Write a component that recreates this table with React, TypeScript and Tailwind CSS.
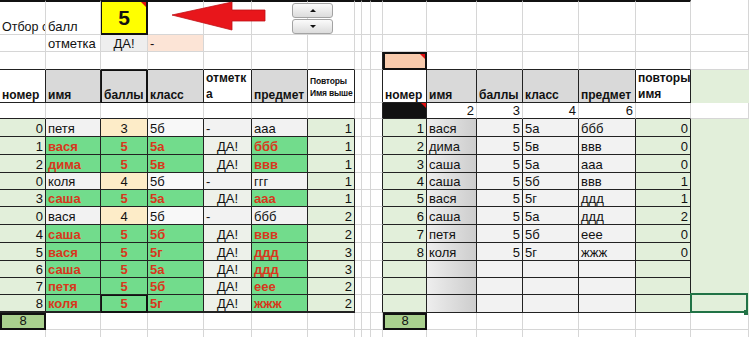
import React from "react";

// gridline / table border variants (per side colours so nothing fights)
const GRID = "border-r border-b border-r-[#d6d6d6] border-b-[#d6d6d6]";
const BOX = "border-r border-b border-r-[#222] border-b-[#222]";
const BOXL = "border-r border-b-2 border-r-[#222] border-b-[#222]";
const UNDER = "border-r border-b border-r-[#d6d6d6] border-b-[#222]";
const EDGE = "border-r border-b border-r-[#222] border-b-[#d6d6d6]";
const FILL = "border-r border-b border-r-[#e2efda] border-b-[#e2efda] bg-[#e2efda]";
const TOP = " border-t-2 border-t-[#111]";

const A = " items-end px-[2px] leading-[14px]";
const L = A + " justify-start";
const R = A + " justify-end";
const M = A + " justify-center";

const HL = " bg-[#72dc8c] text-[#d8371c] font-bold";

const leftRows: [string, string, string, string, string, string, string, boolean][] = [
  ["0", "петя", "3", "5б", "-", "ааа", "1", false],
  ["1", "вася", "5", "5а", "ДА!", "ббб", "1", true],
  ["2", "дима", "5", "5в", "ДА!", "ввв", "1", true],
  ["0", "коля", "4", "5б", "-", "ггг", "1", false],
  ["3", "саша", "5", "5а", "ДА!", "ааа", "1", true],
  ["0", "вася", "4", "5б", "-", "ббб", "2", false],
  ["4", "саша", "5", "5б", "ДА!", "ввв", "2", true],
  ["5", "вася", "5", "5г", "ДА!", "ддд", "3", true],
  ["6", "саша", "5", "5а", "ДА!", "ддд", "3", true],
  ["7", "петя", "5", "5б", "ДА!", "еее", "2", true],
  ["8", "коля", "5", "5г", "ДА!", "жжж", "2", true],
];

const rightRows: string[][] = [
  ["1", "вася", "5", "5а", "ббб", "0"],
  ["2", "дима", "5", "5в", "ввв", "0"],
  ["3", "саша", "5", "5а", "ааа", "0"],
  ["4", "саша", "5", "5б", "ввв", "1"],
  ["5", "вася", "5", "5г", "ддд", "1"],
  ["6", "саша", "5", "5а", "ддд", "2"],
  ["7", "петя", "5", "5б", "еее", "0"],
  ["8", "коля", "5", "5г", "жжж", "0"],
  ["", "", "", "", "", ""],
  ["", "", "", "", "", ""],
  ["", "", "", "", "", ""],
];

function Tri() {
  return <span className="absolute right-0 top-0 h-0 w-0 border-l-[5px] border-t-[5px] border-l-transparent border-t-[#e01010]" />;
}

function X({ c, children }: { c: string; children?: React.ReactNode }) {
  return <div className={"relative flex min-w-0 overflow-hidden whitespace-nowrap " + c}>{children}</div>;
}

export default function App() {
  const cells: React.ReactNode[] = [];
  const put = (c: string, content?: React.ReactNode) => cells.push(<X key={cells.length} c={c}>{content}</X>);
  const gaps = (from: number, to: number, c: string) => {
    for (let i = from; i <= to; i++) put(c);
  };

  // row 0
  put(GRID + TOP + L + " text-[12.5px]", "Отбор с");
  put(GRID + TOP + L, "балл");
  put("border-t-2 border-l border-r-2 border-b-2 border-[#111] bg-[#ffff00] items-end justify-center pb-[5px] leading-[20px] text-[21px] font-bold", <>5<Tri /></>);
  gaps(3, 15, GRID + TOP);
  put(GRID);

  // row 1
  put(GRID);
  put(GRID + L, "отметка");
  put(GRID + M + " bg-[#eeeeee]", "ДА!");
  put(GRID + L + " bg-[#fce4d6]", "-");
  gaps(4, 16, GRID);

  // row 2
  gaps(0, 6, UNDER);
  gaps(7, 8, GRID);
  put(EDGE);
  put("border-2 border-[#111] bg-[#f8cbad]", <Tri />);
  gaps(11, 15, UNDER);
  put(GRID);

  // row 3 header
  const H = " font-bold text-[12px]";
  put(BOX + L + H + " bg-white", "номер");
  put(BOX + L + H + " bg-[#d9d9d9]", "имя");
  put("border-l border-t border-r-2 border-b border-[#111] bg-[#d9d9d9]" + L + H, "баллы");
  put(BOX + L + H + " bg-[#d9d9d9]", "класс");
  put(BOX + " items-end px-[2px] leading-[16px]" + H, <span className="whitespace-pre">{"отметк\nа"}</span>);
  put(BOX + L + H + " bg-[#d9d9d9]", "предмет");
  put(BOX + " items-end px-[2px] pb-[3px] font-bold text-[8.5px] leading-[12px] tracking-[-0.2px]", <span className="whitespace-pre">{"Повторы\nИмя выше"}</span>);
  gaps(7, 8, GRID);
  put(EDGE);
  put(BOX + L + H + " bg-white", "номер");
  put(BOX + L + H + " bg-[#d9d9d9]", "имя");
  put(BOX + L + H + " bg-[#d9d9d9]", "баллы");
  put(BOX + L + H + " bg-[#d9d9d9]", "класс");
  put(BOX + L + H + " bg-[#d9d9d9]", "предмет");
  put(BOX + " items-end px-[2px] leading-[16px]" + H, <span className="whitespace-pre">{"повторы\nимя"}</span>);
  put(FILL);

  // row 4
  gaps(0, 6, UNDER);
  gaps(7, 8, GRID);
  put(EDGE);
  put(BOX + " bg-[#111]", <Tri />);
  put(UNDER + R, "2");
  put(UNDER + R, "3");
  put(UNDER + R, "4");
  put(UNDER + R, "6");
  put(UNDER);
  put(GRID);

  // data rows
  leftRows.forEach((d, i) => {
    const last = i === leftRows.length - 1;
    const B = last ? BOXL : BOX;
    const hl = d[7];
    put(B + R + " bg-[#e2efda]", d[0]);
    put(B + L + (hl ? HL : " bg-[#f2f2f2]"), d[1]);
    put(
      (last ? "border-l border-t border-r-2 border-b-2 border-[#111]" : B) + M + (hl ? HL : " bg-[#fdecc8]"),
      d[2]
    );
    put(B + L + (hl ? HL : " bg-[#f8f8f8]"), d[3]);
    put(B + (hl ? M + " bg-[#edf1ea]" : L + " bg-[#f2f2f2]"), d[4]);
    put(B + L + (hl ? HL : " bg-[#f2f2f2]"), d[5]);
    put(B + R + " bg-[#e2efda]", d[6]);
    gaps(7, 8, GRID);
    put(EDGE);
    const r = rightRows[i];
    put(BOX + R + " bg-[#e2efda]", r[0]);
    put(BOX + L + " bg-linear-to-r from-[#eeeeee] to-[#cdcdcd]", r[1]);
    put(BOX + R + " bg-[#f2f2f2]", r[2]);
    put(BOX + L + " bg-[#f2f2f2]", r[3]);
    put(BOX + L + " bg-[#f2f2f2]", r[4]);
    put(BOX + R + " bg-[#e2efda]", r[5]);
    if (last) {
      put(
        FILL + " overflow-visible",
        <>
          <span className="absolute -left-px -top-[2px] bottom-[-1px] right-0 border-2 border-[#217346]" />
          <span className="absolute -bottom-[3px] right-0 h-[5px] w-[4px] bg-[#217346]" />
        </>
      );
    } else {
      put(FILL);
    }
  });

  // summary row
  put("border-2 border-[#111] bg-[#a9d08e] items-end justify-center leading-[14px]", "8");
  gaps(1, 9, GRID);
  put("border-2 border-[#111] bg-[#a9d08e] items-end justify-center leading-[14px]", "8");
  gaps(11, 16, GRID);

  // partial row
  gaps(0, 16, GRID);

  return (
    <div className="relative h-[337px] w-[749px] overflow-hidden bg-white font-['Liberation_Sans',Arial,sans-serif] text-[13px] text-[#111]">
      <div className="grid grid-cols-[46px_55px_47px_56px_48px_56px_47px_7px_9px_12px_44px_50px_46px_56px_57px_55px_58px] grid-rows-[35px_17px_18px_33px_16px_18px_18px_18px_17px_17px_18px_18px_18px_17px_17px_18px_17px_20px]">
        {cells}
      </div>

      {/* red arrow shape */}
      <svg className="absolute left-[170px] top-0" width="100" height="34" viewBox="0 0 100 34">
        <polygon points="2,15 62,2 62,10 95,10 95,21 62,21 62,30" fill="#e8161b" stroke="#c01015" strokeWidth="0.8" />
      </svg>

      {/* spin button */}
      <div className="absolute left-[292px] top-[3px] flex w-[41px] flex-col gap-px">
        <div className="flex h-[15px] items-center justify-center rounded-[3px] border border-[#a3a3a3] bg-linear-to-b from-[#fbfbfb] to-[#dcdcdc]">
          <span className="h-0 w-0 border-x-[3px] border-b-[3px] border-x-transparent border-b-[#111]" />
        </div>
        <div className="flex h-[15px] items-center justify-center rounded-[3px] border border-[#a3a3a3] bg-linear-to-b from-[#fbfbfb] to-[#dcdcdc]">
          <span className="h-0 w-0 border-x-[3px] border-t-[3px] border-x-transparent border-t-[#111]" />
        </div>
      </div>
    </div>
  );
}
